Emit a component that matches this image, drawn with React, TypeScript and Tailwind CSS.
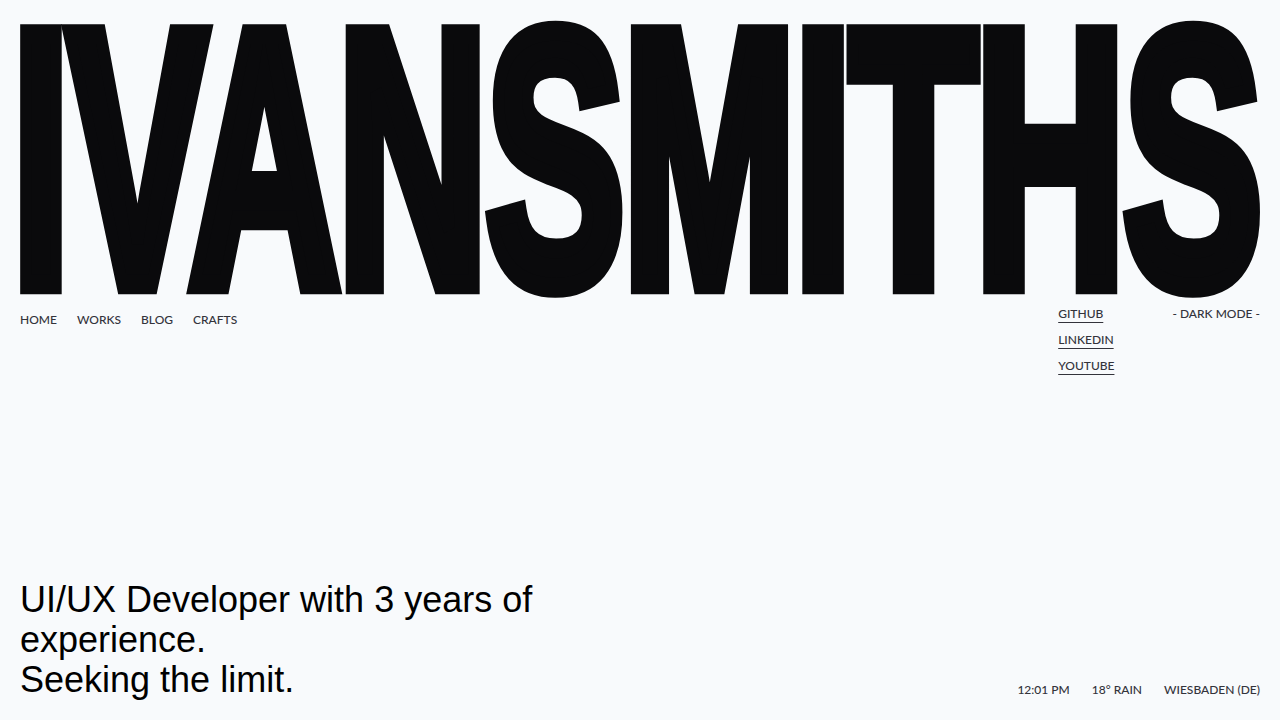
const navLinks = ["HOME", "WORKS", "BLOG", "CRAFTS"];
const socials = ["GITHUB", "LINKEDIN", "YOUTUBE"];

const App = () => {
  return (
    <div className="w-screen h-screen overflow-hidden bg-[#f8fafc] flex flex-col px-5 font-['Lato',sans-serif] font-medium text-[#33333b]">
      {/* big wordmark, stretched tall like a condensed display face */}
      <div className="pt-[14px] h-[304px]">
        <h1 className="w-max -ml-2 origin-top-left scale-y-[1.743] whitespace-nowrap font-['Liberation_Sans',Arial,sans-serif] font-bold text-[208.3px] leading-[0.8] text-[#0a0a0c] tracking-[-0.01em] [-webkit-text-stroke:11.5px_#0a0a0c]">
          IVANSMITHS
        </h1>
      </div>

      <div className="flex justify-between items-start">
        <nav className="flex gap-5 mt-1.5 text-xs leading-5">
          {navLinks.map((l) => (
            <a key={l} href="#" className="hover:text-black">
              {l}
            </a>
          ))}
        </nav>
        <div className="flex gap-[58px] text-xs leading-5">
          <div className="flex flex-col gap-1.5">
            {socials.map((s) => (
              <a
                key={s}
                href="#"
                className="underline underline-offset-[4px] decoration-1"
              >
                {s}
              </a>
            ))}
          </div>
          <button className="h-5">- DARK MODE -</button>
        </div>
      </div>

      <div className="flex-1" />

      <div className="flex justify-between items-end pb-5">
        <p className="max-w-[560px] font-['Liberation_Sans',Arial,sans-serif] font-normal text-4xl text-black">
          UI/UX Developer with 3 years of experience.
          <br />
          Seeking the limit.
        </p>
        <div className="flex gap-[22px] text-xs leading-5">
          <span>12:01 PM</span>
          <span>18° RAIN</span>
          <span>WIESBADEN (DE)</span>
        </div>
      </div>
    </div>
  );
};

export default App;
